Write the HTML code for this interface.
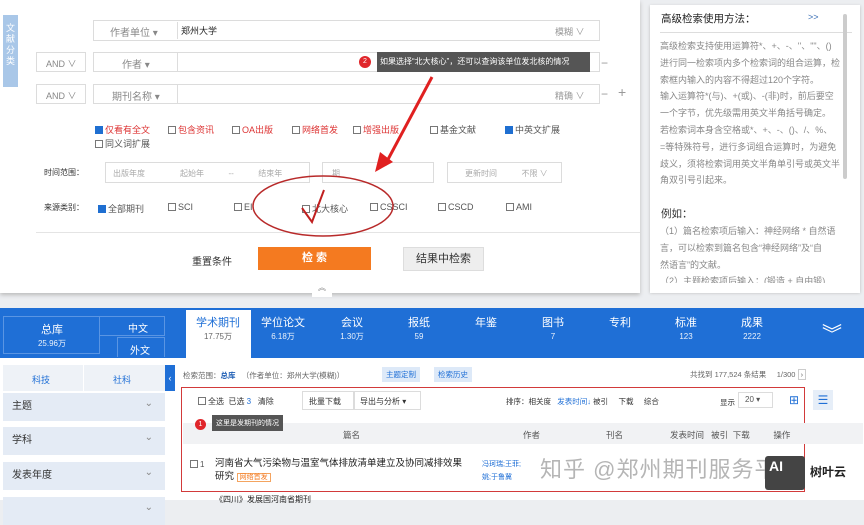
<!DOCTYPE html>
<html><head><meta charset="utf-8"><style>
*{margin:0;padding:0;box-sizing:border-box}
body{width:864px;height:500px;overflow:hidden;background:#eceef1;font-family:"Liberation Sans","Noto Sans CJK SC",sans-serif;font-size:9px;color:#555;position:relative}
.a{position:absolute;white-space:nowrap}
.box{position:absolute;border:1px solid #dcdcdc;background:#fff}
.cb{display:inline-block;width:8px;height:8px;border:1px solid #777;vertical-align:-1px;margin-right:2px;background:#fff}
.cbc{background:#1f6fd1;border-color:#1f6fd1}
.red{color:#d33}
.tab{position:absolute;top:316px;color:#fff;text-align:center;width:60px;font-size:11px;line-height:14px}
.tab small{display:block;font-size:8px;opacity:.9}
.side{position:absolute;left:3px;width:162px;height:28px;background:#e4ebf5;font-size:10px;color:#333;line-height:28px;padding-left:9px}
.side:after{content:"⌄";position:absolute;right:12px;top:-3px;color:#888}
.rp{position:absolute;left:660px;white-space:nowrap;color:#888;font-size:9px;line-height:16.8px}
</style></head><body>
<!-- top panel -->
<div class="a" style="left:0;top:0;width:640px;height:293px;background:#fff;box-shadow:0 2px 4px #bbb"></div>
<div class="a" style="left:3px;top:15px;width:15px;height:72px;background:#a9c7e8;color:#fff;font-size:9px;line-height:11px;white-space:normal;text-align:center;padding-top:8px">文献分类</div>
<div class="box" style="left:93px;top:20px;width:507px;height:21px"></div>
<div class="a" style="left:110px;top:24px;color:#888;font-size:10px">作者单位 ▾</div>
<div class="a" style="left:177px;top:22px;width:1px;height:17px;background:#ddd"></div>
<div class="a" style="left:181px;top:24px;color:#222;font-size:9px">郑州大学</div>
<div class="a" style="left:555px;top:25px;color:#999;font-size:9px">模糊 ∨</div>

<div class="box" style="left:36px;top:52px;width:50px;height:20px"></div><div class="a" style="left:46px;top:57px;color:#888">AND ∨</div>
<div class="box" style="left:93px;top:52px;width:507px;height:20px"></div>
<div class="a" style="left:122px;top:56px;color:#888;font-size:10px">作者 ▾</div>
<div class="a" style="left:177px;top:53px;width:1px;height:18px;background:#ddd"></div>
<div class="a" style="left:359px;top:56px;width:12px;height:12px;border-radius:6px;background:#e0262b;color:#fff;font-size:7px;text-align:center;line-height:12px">2</div>
<div class="a" style="left:377px;top:52px;width:213px;height:20px;background:#555;color:#fff;font-size:8px;line-height:20px;padding-left:3px">如果选择“北大核心”，还可以查询该单位发北核的情况</div>
<div class="a" style="left:601px;top:56px;color:#999;font-size:12px">−</div>

<div class="box" style="left:36px;top:84px;width:50px;height:20px"></div><div class="a" style="left:46px;top:89px;color:#888">AND ∨</div>
<div class="box" style="left:93px;top:84px;width:507px;height:20px"></div>
<div class="a" style="left:112px;top:88px;color:#888;font-size:10px">期刊名称 ▾</div>
<div class="a" style="left:177px;top:85px;width:1px;height:18px;background:#ddd"></div>
<div class="a" style="left:555px;top:89px;color:#999">精确 ∨</div>
<div class="a" style="left:601px;top:87px;color:#999;font-size:12px">−</div>
<div class="a" style="left:618px;top:84px;color:#999;font-size:14px">+</div>

<div class="a red" style="left:95px;top:123px;font-size:9px"><span class="cb cbc"></span>仅看有全文</div>
<div class="a red" style="left:168px;top:123px"><span class="cb"></span>包含资讯</div>
<div class="a red" style="left:232px;top:123px"><span class="cb"></span>OA出版</div>
<div class="a red" style="left:292px;top:123px"><span class="cb"></span>网络首发</div>
<div class="a red" style="left:353px;top:123px"><span class="cb"></span>增强出版</div>
<div class="a" style="left:430px;top:123px"><span class="cb"></span>基金文献</div>
<div class="a" style="left:505px;top:123px"><span class="cb cbc"></span>中英文扩展</div>
<div class="a" style="left:95px;top:137px"><span class="cb"></span>同义词扩展</div>

<div class="a" style="left:44px;top:167px;color:#333;font-size:8px">时间范围：</div>
<div class="box" style="left:105px;top:162px;width:205px;height:21px"></div>
<div class="a" style="left:113px;top:168px;color:#aaa;font-size:8px">出版年度</div>
<div class="a" style="left:180px;top:168px;color:#aaa;font-size:8px">起始年 &nbsp; &nbsp; &nbsp; &nbsp; &nbsp; -- &nbsp; &nbsp; &nbsp; &nbsp; &nbsp; 结束年</div>
<div class="box" style="left:322px;top:162px;width:112px;height:21px"></div>
<div class="a" style="left:332px;top:168px;color:#aaa;font-size:8px">期</div>
<div class="box" style="left:447px;top:162px;width:115px;height:21px"></div>
<div class="a" style="left:465px;top:168px;color:#aaa;font-size:8px">更新时间 &nbsp; &nbsp; &nbsp; &nbsp; &nbsp; 不限 ∨</div>

<div class="a" style="left:44px;top:202px;color:#333;font-size:8px">来源类别：</div>
<div class="a" style="left:98px;top:202px"><span class="cb cbc"></span>全部期刊</div>
<div class="a" style="left:168px;top:202px"><span class="cb"></span>SCI</div>
<div class="a" style="left:234px;top:202px"><span class="cb"></span>EI</div>
<div class="a" style="left:302px;top:202px"><span class="cb"></span>北大核心</div>
<div class="a" style="left:370px;top:202px"><span class="cb"></span>CSSCI</div>
<div class="a" style="left:438px;top:202px"><span class="cb"></span>CSCD</div>
<div class="a" style="left:506px;top:202px"><span class="cb"></span>AMI</div>
<div class="a" style="left:36px;top:232px;width:604px;height:1px;background:#e4e4e4"></div>
<div class="a" style="left:192px;top:253px;color:#333;font-size:10px">重置条件</div>
<div class="a" style="left:258px;top:247px;width:113px;height:23px;background:#f47a20;color:#fff;font-size:11px;text-align:center;line-height:23px;font-weight:bold">检 索</div>
<div class="a" style="left:403px;top:247px;width:81px;height:24px;background:#eee;border:1px solid #ddd;color:#333;font-size:11px;text-align:center;line-height:22px">结果中检索</div>
<div class="a" style="left:312px;top:281px;width:20px;height:16px;border-radius:10px 10px 0 0;background:#fff;color:#888;text-align:center;font-size:8px;line-height:14px">︽</div>
<svg class="a" style="left:0;top:0" width="640" height="300">
<ellipse cx="323" cy="206" rx="70" ry="30" fill="none" stroke="#b82a2a" stroke-width="1.5"/>
<path d="M302 208 L312 222 L324 190" fill="none" stroke="#c02020" stroke-width="2"/>
<path d="M432 77 L385 165" stroke="#e02020" stroke-width="3"/>
<path d="M375 172 L380 152 L393 162 Z" fill="#e02020"/>
</svg>

<!-- right panel -->
<div class="a" style="left:650px;top:5px;width:210px;height:287px;background:#fff;box-shadow:0 1px 3px #bbb"></div>
<div class="a" style="left:661px;top:11px;color:#222;font-size:10.5px">高级检索使用方法：</div>
<div class="a" style="left:808px;top:12px;color:#3a6fb5;font-size:9px">&gt;&gt;</div>
<div class="a" style="left:660px;top:32px;width:192px;height:1px;background:#ddd"></div>
<div class="a" style="left:843px;top:14px;width:4px;height:165px;background:#ccc;border-radius:2px"></div>
<div class="rp" style="top:38px">高级检索支持使用运算符*、+、-、''、""、()<br>进行同一检索项内多个检索词的组合运算，检<br>索框内输入的内容不得超过120个字符。<br>输入运算符*(与)、+(或)、-(非)时，前后要空<br>一个字节，优先级需用英文半角括号确定。<br>若检索词本身含空格或*、+、-、()、/、%、<br>=等特殊符号，进行多词组合运算时，为避免<br>歧义，须将检索词用英文半角单引号或英文半<br>角双引号引起来。</div>
<div class="a" style="left:661px;top:206px;color:#333;font-size:10.5px">例如：</div>
<div class="rp" style="top:223px">（1）篇名检索项后输入：神经网络 * 自然语<br>言，可以检索到篇名包含“神经网络”及“自<br>然语言”的文献。<br>（2）主题检索项后输入：(锻造 + 自由锻)</div>
<div class="a" style="left:650px;top:283px;width:210px;height:10px;background:#fff"></div>

<!-- blue bar -->
<div class="a" style="left:0;top:308px;width:864px;height:50px;background:#1f6fd6"></div>
<div class="a" style="left:3px;top:316px;width:97px;height:38px;border:1px solid #5a95e3"></div>
<div class="a" style="left:100px;top:316px;width:65px;height:20px;border:1px solid #5a95e3;border-left:none"></div>
<div class="a" style="left:117px;top:337px;width:48px;height:20px;border:1px solid #5a95e3;border-bottom:none"></div>
<div class="tab" style="left:22px;top:323px">总库<small>25.96万</small></div>
<div class="a" style="left:128px;top:320px;color:#fff;font-size:10px">中文</div>
<div class="a" style="left:130px;top:342px;color:#fff;font-size:10px">外文</div>
<div class="a" style="left:186px;top:310px;width:65px;height:48px;background:#fff"></div>
<div class="tab" style="left:188px;color:#1f6fd6">学术期刊<small style="color:#555">17.75万</small></div>
<div class="tab" style="left:253px">学位论文<small>6.18万</small></div>
<div class="tab" style="left:322px">会议<small>1.30万</small></div>
<div class="tab" style="left:389px">报纸<small>59</small></div>
<div class="tab" style="left:456px">年鉴<small>&nbsp;</small></div>
<div class="tab" style="left:523px">图书<small>7</small></div>
<div class="tab" style="left:590px">专利<small>&nbsp;</small></div>
<div class="tab" style="left:656px">标准<small>123</small></div>
<div class="tab" style="left:722px">成果<small>2222</small></div>
<div class="a" style="left:822px;top:318px;color:#fff;font-size:20px">︾</div>

<!-- sidebar -->
<div class="a" style="left:0;top:358px;width:864px;height:142px;background:#fff"></div>
<div class="a" style="left:3px;top:365px;width:162px;height:26px;background:#eef2f7"></div>
<div class="a" style="left:32px;top:373px;color:#1f6fd6;font-size:9px">科技</div>
<div class="a" style="left:113px;top:373px;color:#1f6fd6;font-size:9px">社科</div>
<div class="a" style="left:83px;top:365px;width:1px;height:26px;background:#fff"></div>
<div class="side" style="top:393px">主题</div>
<div class="side" style="top:427px">学科</div>
<div class="side" style="top:462px">发表年度</div>
<div class="side" style="top:497px"></div>
<div class="a" style="left:165px;top:365px;width:10px;height:26px;background:#1f6fd6;color:#fff;font-size:9px;line-height:26px;text-align:center">‹</div>

<!-- content -->
<div class="a" style="left:183px;top:370px;font-size:7.5px;color:#666">检索范围：<b style="color:#1f5fb5">总库</b> &nbsp; （作者单位：郑州大学(模糊)）</div>
<div class="a" style="left:382px;top:367px;background:#dde9f8;color:#1f6fd6;padding:2px 4px;font-size:7.5px">主题定制</div>
<div class="a" style="left:434px;top:367px;background:#dde9f8;color:#1f6fd6;padding:2px 4px;font-size:7.5px">检索历史</div>
<div class="a" style="left:690px;top:369px;font-size:7.5px;color:#666">共找到 177,524 条结果 &nbsp; &nbsp; 1/300 <span style="border:1px solid #ccc;padding:0 2px">›</span></div>

<div class="a" style="left:181px;top:387px;width:624px;height:105px;border:1.5px solid #d23a3a"></div>
<div class="a" style="left:198px;top:396px;font-size:8px;color:#333"><span class="cb"></span>全选 &nbsp;已选 <span style="color:#1f6fd6">3</span> &nbsp; 清除</div>
<div class="box" style="left:302px;top:391px;width:52px;height:19px"></div><div class="a" style="left:309px;top:396px;font-size:8px;color:#333">批量下载</div>
<div class="box" style="left:354px;top:391px;width:67px;height:19px"></div><div class="a" style="left:360px;top:396px;font-size:8px;color:#333">导出与分析 ▾</div>
<div class="a" style="left:506px;top:396px;font-size:7.5px;color:#333">排序：相关度 &nbsp; <span style="color:#1f6fd6">发表时间↓</span> 被引 &nbsp; &nbsp; 下载 &nbsp; &nbsp; 综合</div>
<div class="a" style="left:720px;top:397px;font-size:7.5px;color:#333">显示</div>
<div class="box" style="left:738px;top:392px;width:35px;height:16px"></div><div class="a" style="left:745px;top:395px;font-size:8px">20 ▾</div>
<div class="a" style="left:789px;top:393px;color:#1f6fd6;font-size:12px">⊞</div>
<div class="a" style="left:813px;top:390px;width:20px;height:20px;background:#e6eef8;color:#1f6fd6;font-size:12px;text-align:center;line-height:20px">☰</div>

<div class="a" style="left:183px;top:423px;width:680px;height:21px;background:#f1f2f4"></div>
<div class="a" style="left:195px;top:419px;width:11px;height:11px;border-radius:6px;background:#e0262b;color:#fff;font-size:7px;text-align:center;line-height:11px">1</div>
<div class="a" style="left:212px;top:415px;background:#555;color:#fff;font-size:7px;padding:3px 4px">这里是发期刊的情况</div>
<div class="a" style="left:343px;top:429px;color:#555;font-size:8.5px">篇名</div>
<div class="a" style="left:523px;top:429px;color:#555;font-size:8.5px">作者</div>
<div class="a" style="left:606px;top:429px;color:#555;font-size:8.5px">刊名</div>
<div class="a" style="left:670px;top:429px;color:#555;font-size:8.5px">发表时间 &nbsp; 被引 &nbsp;下载 &nbsp; &nbsp; &nbsp; &nbsp; &nbsp;操作</div>
<div class="a" style="left:190px;top:460px;font-size:8px;color:#555"><span class="cb"></span>1</div>
<div class="a" style="left:215px;top:455px;font-size:9.5px;color:#222">河南省大气污染物与温室气体排放清单建立及协同减排效果</div>
<div class="a" style="left:215px;top:468px;font-size:9.5px;color:#222">研究 <span style="border:1px solid #f4a460;color:#f47a20;font-size:7px;padding:0 2px">网络首发</span></div>
<div class="a" style="left:482px;top:458px;font-size:7px;color:#1f6fd6;line-height:13px">冯珂瑞;王菲;<br>姚;于鲁冀</div>
<div class="a" style="left:540px;top:452px;font-size:22px;color:rgba(120,120,120,.55);letter-spacing:1px">知乎 @郑州期刊服务平台</div>
<div class="a" style="left:765px;top:456px;width:40px;height:34px;background:#444;border-radius:3px;color:#fff;font-size:14px;font-weight:bold;padding:2px 4px">AI</div>
<div class="a" style="left:810px;top:463px;color:#222;font-size:12px;font-weight:bold">树叶云</div>
<div class="a" style="left:215px;top:494px;font-size:8px;color:#222">《四川》发展国河南省期刊</div>
</body></html>
